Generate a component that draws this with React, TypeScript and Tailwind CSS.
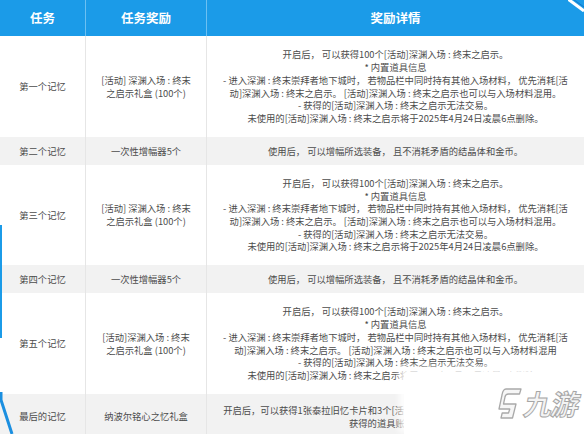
const BLUE = "bg-[#1b9be8]";

type Row = {
  task: string;
  reward: string[];
  detail: string[];
  gray?: boolean;
  h: string;
};

const BOX_DETAIL = [
  "开启后， 可以获得100个[活动]深渊入场 : 终末之启示。",
  "* 内置道具信息",
  "- 进入深渊 : 终末崇拜者地下城时， 若物品栏中同时持有其他入场材料， 优先消耗[活",
  "动]深渊入场 : 终末之启示。 [活动]深渊入场 : 终末之启示也可以与入场材料混用。",
  "- 获得的[活动]深渊入场 : 终末之启示无法交易。",
  "未使用的[活动]深渊入场 : 终末之启示将于2025年4月24日凌晨6点删除。",
];

const AMP = ["使用后， 可以增幅所选装备， 且不消耗矛盾的结晶体和金币。"];

const ROWS: Row[] = [
  { task: "第一个记忆", reward: ["[活动] 深渊入场 : 终末", "之启示礼盒 (100个)"], detail: BOX_DETAIL, h: "h-[101px]" },
  { task: "第二个记忆", reward: ["一次性增幅器5个"], detail: AMP, gray: true, h: "h-[28px]" },
  { task: "第三个记忆", reward: ["[活动] 深渊入场 : 终末", "之启示礼盒 (100个)"], detail: BOX_DETAIL, h: "h-[100px]" },
  { task: "第四个记忆", reward: ["一次性增幅器5个"], detail: AMP, gray: true, h: "h-[28px]" },
  {
    task: "第五个记忆",
    reward: ["[活动]深渊入场 : 终末", "之启示礼盒 (100个)"],
    detail: [
      BOX_DETAIL[0],
      BOX_DETAIL[1],
      BOX_DETAIL[2],
      "动]深渊入场 : 终末之启示。 [活动]深渊入场 : 终末之启示也可以与入场材料混用",
      BOX_DETAIL[4],
      BOX_DETAIL[5],
    ],
    h: "h-[101px]",
  },
  {
    task: "最后的记忆",
    reward: ["纳波尔铭心之忆礼盒"],
    detail: [
      "开启后，可以获得1张泰拉旧忆卡片和3个[活动]深渊入场 : 终末之启示礼盒 (100个)。",
      "获得的道具账号绑定。",
    ],
    gray: true,
    h: "h-[45px]",
  },
];

export default function App() {
  return (
    <div
      className="relative h-[434px] w-[584px] overflow-hidden bg-white text-[#4c4c4c]"
      style={{ fontFamily: '"Noto Sans CJK SC", "Noto Sans", sans-serif' }}
    >
      {/* header */}
      <div className={`grid h-[36px] grid-cols-[86px_121px_1fr] ${BLUE} text-[12.5px] font-bold text-white`}>
        <div className="flex items-center justify-center border-r border-[#6cc0f2]">任务</div>
        <div className="flex items-center justify-center border-r border-[#6cc0f2]">任务奖励</div>
        <div className="flex items-center justify-center">奖励详情</div>
      </div>

      {ROWS.map((r) => (
        <div
          key={r.task}
          className={`grid ${r.h} shrink-0 grid-cols-[86px_121px_1fr] text-[9.3px] leading-[12.7px] ${
            r.gray ? "bg-[#f2f2f2]" : "bg-white"
          }`}
        >
          <div className="flex items-center justify-center border-r border-[#e6e6e6]">{r.task}</div>
          <div className="flex flex-col items-center justify-center border-r border-[#e6e6e6] text-center">
            {r.reward.map((l) => (
              <div key={l} className="whitespace-nowrap">{l}</div>
            ))}
          </div>
          <div className="flex flex-col items-center justify-center text-center">
            {r.detail.map((l, i) => (
              <div key={i} className="whitespace-nowrap">{l}</div>
            ))}
          </div>
        </div>
      ))}

      {/* side decorations */}
      <div className={`absolute left-0 top-[225px] h-[113px] w-[2px] ${BLUE}`} />
      <svg className="absolute left-0 top-[392px]" width="16" height="42" viewBox="0 0 16 42">
        <path d="M1 0 L1 8 L12 42" fill="none" stroke="#1b8fe0" strokeWidth="3" />
      </svg>
      <svg className="absolute right-0 top-0" width="16" height="12" viewBox="0 0 16 12">
        <path d="M0 -1 L16 11" stroke="#ffffff" strokeWidth="3" />
        <path d="M2 -3 L16 7" stroke="#1478c8" strokeWidth="1" />
      </svg>

      {/* watermark */}
      <div className="absolute left-[404px] top-[372px] flex h-[62px] w-[180px] items-center justify-end gap-[3px] rounded-tl-[3px] bg-white pr-[5px] shadow-[-3px_-3px_6px_2px_rgba(255,255,255,0.85)]">
        <svg width="26" height="34" viewBox="0 0 26 34" className="mt-[2px]">
          <path
            d="M10 2 L25 2 L23.5 7 L12.5 7 Q9.5 7 9 10 L7.5 17 L20 17 L16.5 31 L5 31 L6.2 26 L12.5 26 L13.8 22 L3 22 L6 8 Q7 2 10 2 Z"
            fill="#f6f6f6"
            stroke="#a9a9a9"
            strokeWidth="1.3"
            strokeLinejoin="round"
          />
        </svg>
        <span
          className="-skew-x-12 text-[28px] font-bold leading-none tracking-[-1px]"
          style={{ color: "#f4f4f4", WebkitTextStroke: "1px #a6a6a6" }}
        >
          九游
        </span>
      </div>
    </div>
  );
}
